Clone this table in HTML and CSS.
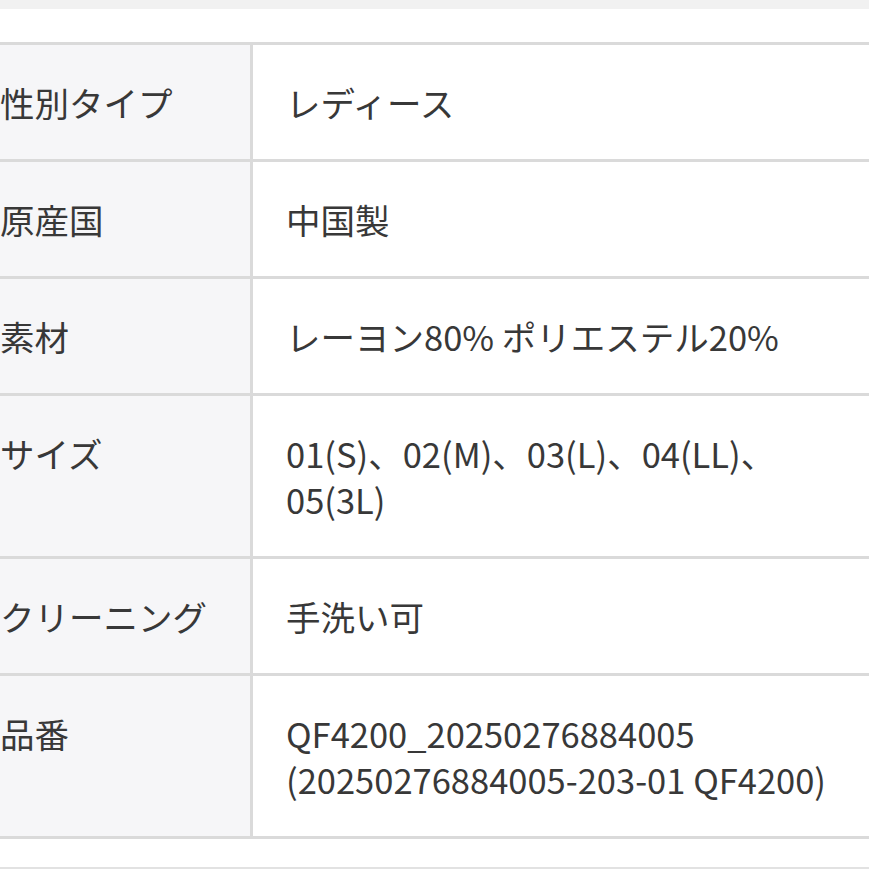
FILE: index.html
```html
<!DOCTYPE html>
<html lang="ja">
<head>
<meta charset="utf-8">
<link rel="stylesheet" href="styles.css">
</head>
<body>
<div class="top-strip"></div>
<table class="spec">
  <tr><th>性別タイプ</th><td>レディース</td></tr>
  <tr><th>原産国</th><td>中国製</td></tr>
  <tr><th>素材</th><td>レーヨン80% ポリエステル20%</td></tr>
  <tr><th>サイズ</th><td>01(S)、02(M)、03(L)、04(LL)、<br>05(3L)</td></tr>
  <tr><th>クリーニング</th><td>手洗い可</td></tr>
  <tr><th>品番</th><td>QF4200_20250276884005<br>(20250276884005-203-01 QF4200)</td></tr>
</table>
<div class="bottom-line"></div>
</body>
</html>
```
FILE: styles.css
```css
html, body {
  margin: 0;
  padding: 0;
  background: #ffffff;
  width: 869px;
  height: 869px;
  overflow: hidden;
}
body {
  font-family: "Noto Sans CJK JP", "Noto Sans", sans-serif;
  color: #383838;
}
.top-strip {
  height: 9px;
  background: #f1f1f1;
  margin-bottom: 33px;
}
.spec {
  width: 100%;
  border-collapse: collapse;
  border-top: 3px solid #dadada;
  border-bottom: 3px solid #dadada;
}
.spec tr {
  border-bottom: 3px solid #dadada;
}
.spec th, .spec td {
  font-size: 34.5px;
  font-weight: 400;
  line-height: 46px;
  padding: 34px 0;
  text-align: left;
  vertical-align: top;
}
.spec th {
  width: 250px;
  background: #f6f6f8;
  padding-left: 0;
  border-right: 3px solid #dadada;
  white-space: nowrap;
}
.spec td {
  padding-left: 33px;
}
.bottom-line {
  margin-top: 28px;
  height: 3px;
  background: #e2e2e2;
}
```
